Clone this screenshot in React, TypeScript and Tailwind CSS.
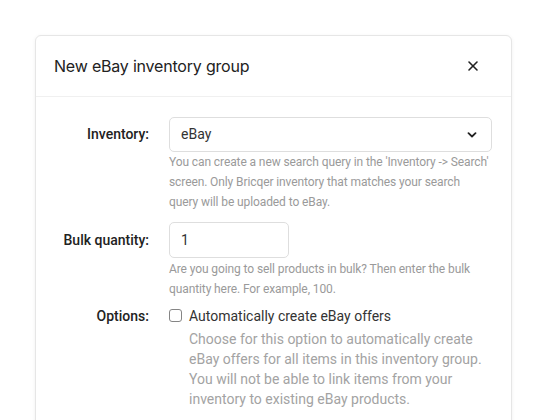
import { X } from "lucide-react";

const App = () => {
  return (
    <div className="w-[548px] h-[420px] bg-white overflow-hidden font-['Roboto',sans-serif]">
      <div className="ml-[35px] mt-[35px] w-[477px] rounded-[6px] border border-[#e6e6e6] bg-white shadow-[0_1px_4px_rgba(0,0,0,0.06)]">
        {/* header */}
        <div className="h-[61px] flex items-center justify-between pl-[18px] pr-[30px] border-b border-[#f0f0f0]">
          <h2 className="font-['Inter',sans-serif] text-[16px] text-[#222] tracking-[-0.2px]">
            New eBay inventory group
          </h2>
          <X size={16} strokeWidth={2.4} className="text-[#222]" />
        </div>

        {/* body */}
        <div className="pt-[20px] pr-[19px] grid grid-cols-[113px_1fr] gap-x-[20px]">
          <div className="h-[35px] flex items-center justify-end text-[14px] font-medium text-[#222]">Inventory:</div>
          <div>
            <div className="h-[35px] rounded-[5px] border border-[#dedede] flex items-center justify-between pl-[11px] pr-[14px] text-[14px] text-[#333]">
              <span>eBay</span>
              <svg width="10" height="6" viewBox="0 0 10 6" fill="none">
                <path d="M1.5 1.2 5 4.5 8.5 1.2" stroke="#222" strokeWidth="1.8" strokeLinecap="round" strokeLinejoin="round" />
              </svg>
            </div>
            <p className="pr-[2px] text-[12px] leading-[20px] tracking-[-0.1px] text-[#9a9a9a]">
              You can create a new search query in the 'Inventory -&gt; Search' screen. Only Bricqer inventory that matches your search query will be uploaded to eBay.
            </p>
          </div>

          <div className="mt-[10px] h-[36px] flex items-center justify-end text-[14px] font-medium text-[#222]">Bulk quantity:</div>
          <div className="mt-[10px]">
            <div className="w-[120px] h-[36px] rounded-[5px] border border-[#dedede] flex items-center pl-[11px] text-[14px] text-[#333]">1</div>
            <p className="mt-[1px] text-[12px] leading-[20px] tracking-[-0.1px] text-[#9a9a9a] pr-[20px]">
              Are you going to sell products in bulk? Then enter the bulk quantity here. For example, 100.
            </p>
          </div>

          <div className="mt-[7px] h-[20px] flex items-center justify-end text-[14px] font-medium text-[#222]">Options:</div>
          <div className="mt-[7px] flex gap-[7px]">
            <div className="mt-[3px] w-[13px] h-[13px] shrink-0 rounded-[3px] border border-[#858585]" />
            <div>
              <div className="text-[14px] leading-[20px] text-[#333]">Automatically create eBay offers</div>
              <p className="mt-[3px] text-[14px] leading-[20px] text-[#a3a3a3] pr-[10px]">
                Choose for this option to automatically create eBay offers for all items in this inventory group. You will not be able to link items from your inventory to existing eBay products.
              </p>
            </div>
          </div>
        </div>
        <div className="h-[40px]" />
      </div>
    </div>
  );
};

export default App;
